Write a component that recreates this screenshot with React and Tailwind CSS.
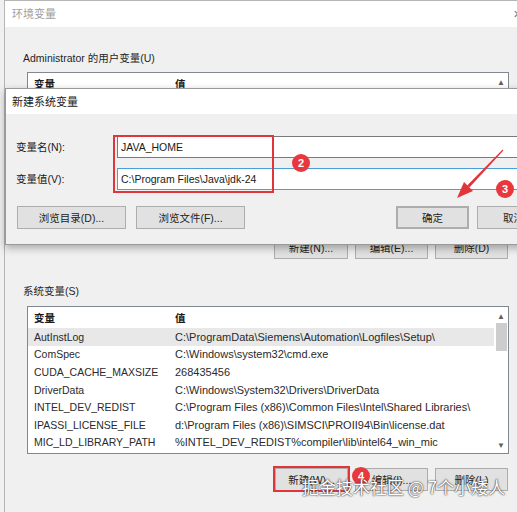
import React from 'react';

const sysVars = [
  ['AutInstLog', 'C:\\ProgramData\\Siemens\\Automation\\Logfiles\\Setup\\'],
  ['ComSpec', 'C:\\Windows\\system32\\cmd.exe'],
  ['CUDA_CACHE_MAXSIZE', '268435456'],
  ['DriverData', 'C:\\Windows\\System32\\Drivers\\DriverData'],
  ['INTEL_DEV_REDIST', 'C:\\Program Files (x86)\\Common Files\\Intel\\Shared Libraries\\'],
  ['IPASSI_LICENSE_FILE', 'd:\\Program Files (x86)\\SIMSCI\\PROII94\\Bin\\license.dat'],
  ['MIC_LD_LIBRARY_PATH', '%INTEL_DEV_REDIST%compiler\\lib\\intel64_win_mic'],
];

// plain windows push button
const WinButton = ({ children, className = '' }) => (
  <div
    className={`h-[23px] flex items-center justify-center border border-[#adadad] bg-[#e1e1e1] text-[#222] ${className}`}
  >
    {children}
  </div>
);

const Badge = ({ n, className }) => (
  <div
    className={`absolute w-[18px] h-[18px] rounded-full bg-[#e8383d] text-white text-[11px] font-bold flex items-center justify-center ${className}`}
  >
    {n}
  </div>
);

const ListHeader = () => (
  <div className="h-[21px] flex items-center text-[#1a1a1a] font-semibold">
    <div className="w-[147px] pl-[6px]">变量</div>
    <div>值</div>
  </div>
);

export default function App() {
  return (
    <div className="relative w-[517px] h-[512px] overflow-hidden bg-[#f0f0f0] text-[10.5px] leading-[14px] font-['Liberation_Sans','Noto_Sans_CJK_SC',sans-serif]">
      {/* background window: 环境变量 */}
      <div className="ml-[4px] h-full flex flex-col border-l border-t border-[#b5b5b5]">
        <div className="h-[26px] shrink-0 bg-white flex items-center justify-between pl-[7px] text-[11px] text-[#a0a0a0]">
          <span>环境变量</span>
          <span className="mr-[-5px] text-[#777]">✕</span>
        </div>

        <div className="flex flex-col pl-[18px] pr-[8px] pt-[24px] text-[#1f1f1f]">
          <div>Administrator 的用户变量(U)</div>

          <div className="mt-[7px] ml-[4px] h-[157px] flex border border-[#828790] bg-white">
            <div className="flex-1">
              <ListHeader />
            </div>
            <div className="w-[14px] flex flex-col items-center pt-[3px] text-[8px] text-[#606060]">
              <span>▲</span>
            </div>
          </div>

          <div className="mt-[7px] flex justify-end gap-[7px] pr-[1px]">
            <WinButton className="w-[74px]">新建(N)...</WinButton>
            <WinButton className="w-[73px]">编辑(E)...</WinButton>
            <WinButton className="w-[73px]">删除(D)</WinButton>
          </div>

          <div className="mt-[25px]">系统变量(S)</div>

          <div className="mt-[8px] ml-[4px] h-[148px] flex border border-[#828790] bg-white text-[#2a2a2a]">
            <div className="flex-1">
              <ListHeader />
              {sysVars.map(([name, value], i) => (
                <div
                  key={name}
                  className={`h-[17.6px] flex items-center ${i === 0 ? 'bg-[#e8e8e8]' : ''}`}
                >
                  <div className="w-[147px] pl-[6px] shrink-0">{name}</div>
                  <div className="whitespace-nowrap text-[11px]">{value}</div>
                </div>
              ))}
            </div>
            <div className="w-[14px] flex flex-col items-center text-[8px] text-[#606060]">
              <span className="h-[16px] pt-[3px]">▲</span>
              <div className="w-[11px] h-[28px] bg-[#cdcdcd]" />
              <div className="flex-1" />
              <span className="h-[14px]">▼</span>
            </div>
          </div>

          <div className="mt-[14px] flex justify-end gap-[7px] pr-[1px]">
            <WinButton className="w-[73px]">新建(W)...</WinButton>
            <WinButton className="w-[73px]">编辑(I)...</WinButton>
            <WinButton className="w-[73px]">删除(L)</WinButton>
          </div>
        </div>
      </div>

      {/* dialog: 新建系统变量 (over the window) */}
      <div className="absolute left-[5px] top-[88px] w-[560px] h-[157px] flex flex-col border border-[#9a9a9a] bg-[#f0f0f0] shadow-[0_3px_8px_rgba(0,0,0,0.3)]">
        <div className="h-[25px] shrink-0 bg-white flex items-center pl-[6px] text-[11px] text-[#222]">
          新建系统变量
        </div>
        <div className="flex flex-col pt-[22px] pl-[10px] text-[#1a1a1a]">
          <div className="flex items-center">
            <div className="w-[101px]">变量名(N):</div>
            <div className="w-[440px] h-[22px] border border-[#7a7a7a] bg-white flex items-center px-[3px]">
              JAVA_HOME
            </div>
          </div>
          <div className="mt-[10px] flex items-center">
            <div className="w-[101px]">变量值(V):</div>
            <div className="w-[440px] h-[22px] border border-[#4a9fd8] bg-white flex items-center px-[3px]">
              C:\Program Files\Java\jdk-24
            </div>
          </div>
          <div className="mt-[16px] pl-[1px] flex">
            <WinButton className="w-[109px]">浏览目录(D)...</WinButton>
            <WinButton className="w-[109px] ml-[10px]">浏览文件(F)...</WinButton>
            <WinButton className="w-[73px] ml-[151px] border-2 border-[#3d8fd6]">确定</WinButton>
            <WinButton className="w-[73px] ml-[8px]">取消</WinButton>
          </div>
        </div>
      </div>

      {/* annotations */}
      <div className="absolute left-[113px] top-[135px] w-[161px] h-[58px] border-2 border-[#e0363b]" />
      <div className="absolute left-[273px] top-[466px] w-[77px] h-[26px] border-2 border-[#e0363b]" />
      <Badge n="2" className="left-[292px] top-[154px]" />
      <Badge n="3" className="left-[496px] top-[180px]" />
      <Badge n="4" className="left-[352px] top-[467px]" />

      <svg className="absolute left-0 top-0 pointer-events-none" width="517" height="512" viewBox="0 0 517 512">
        <polygon points="503.4,150.4 502.6,149.6 467.2,185.4 469.4,187.4" fill="#e0363b" />
        <polygon points="457,198 473,191 464,182" fill="#e0363b" />
      </svg>

      <div className="absolute left-[302px] top-[477px] text-[17px] leading-[20px] text-white whitespace-nowrap font-['Noto_Sans_CJK_SC',sans-serif] [text-shadow:0_0_2px_#333,0_0_1px_#333]">
        掘金技术社区 @ 7个小矮人
      </div>
    </div>
  );
}
